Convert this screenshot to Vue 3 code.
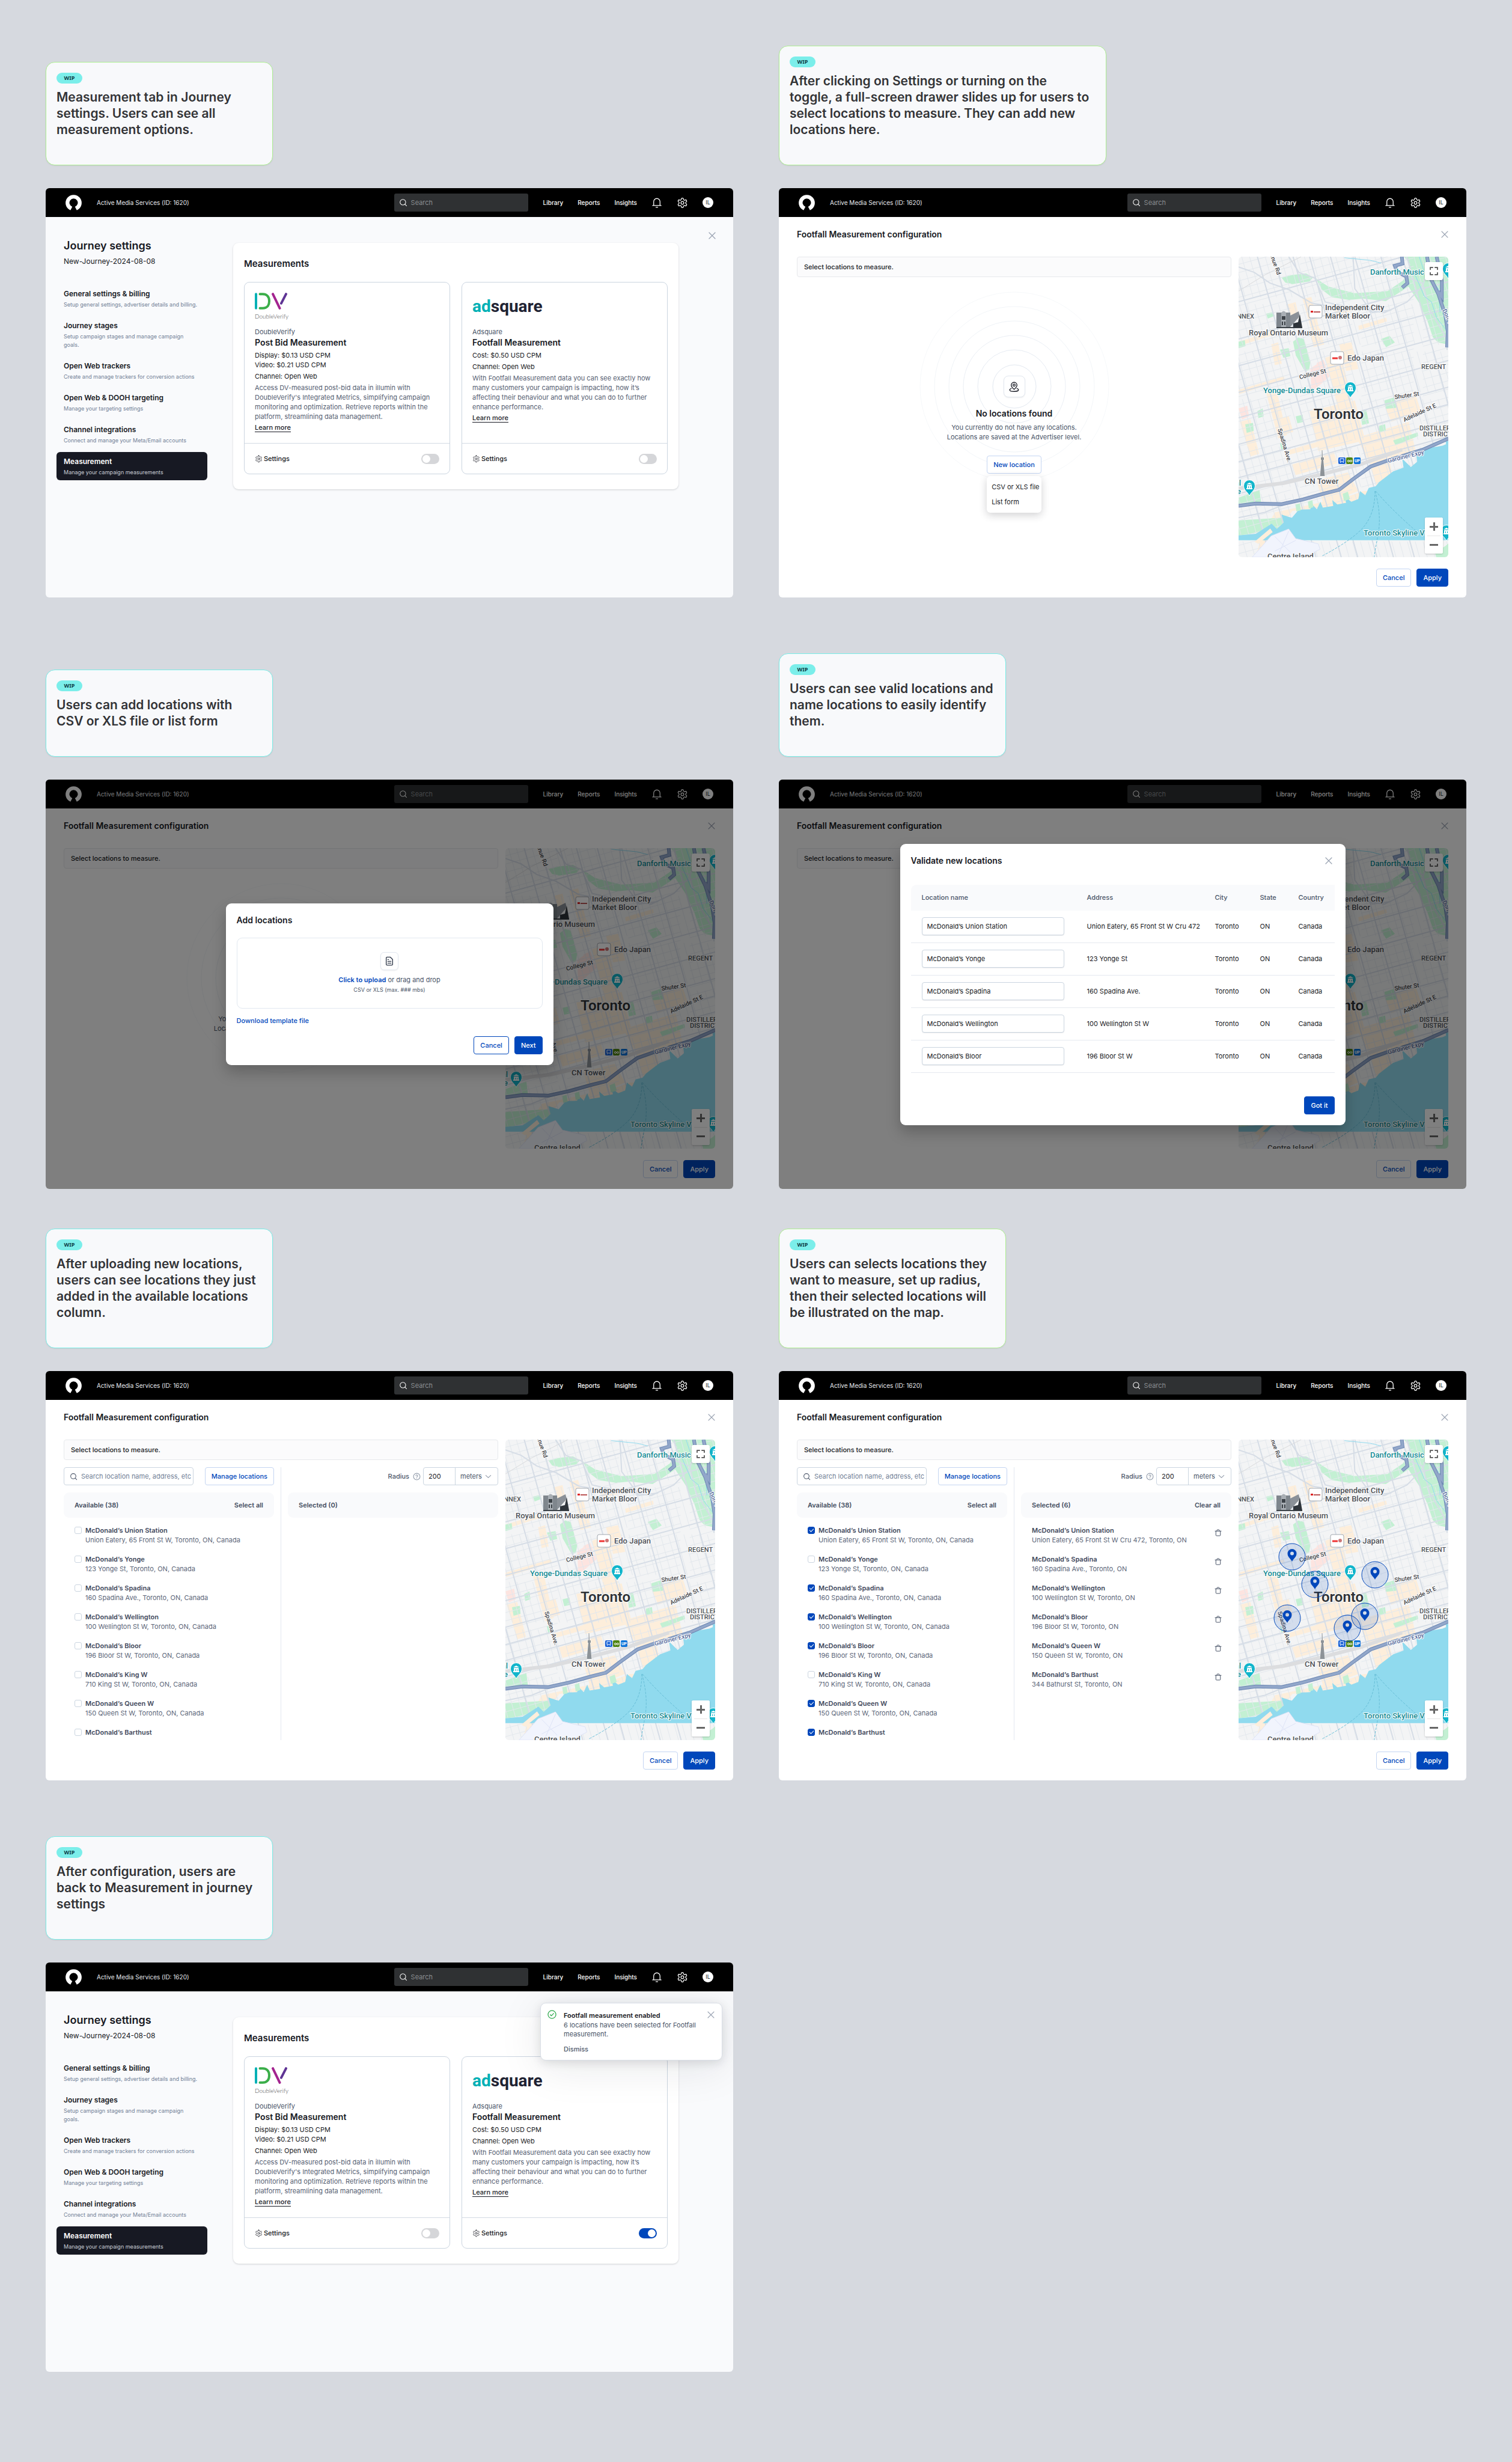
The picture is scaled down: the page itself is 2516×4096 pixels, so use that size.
<script setup>
import { h } from 'vue'

const ICONS = {
  search: '<circle cx="11" cy="11" r="8"/><path d="m21.5 21.5-4.8-4.8"/>',
  bell: '<path d="M5 18.5V10a7 7 0 0 1 14 0v8.5M2.5 18.5h19M10 22.500h4"/>',
  gear: '<path d="M12.22 2h-.44a2 2 0 0 0-2 2v.18a2 2 0 0 1-1 1.73l-.43.25a2 2 0 0 1-2 0l-.15-.08a2 2 0 0 0-2.73.73l-.22.38a2 2 0 0 0 .73 2.73l.15.1a2 2 0 0 1 1 1.72v.51a2 2 0 0 1-1 1.74l-.15.09a2 2 0 0 0-.73 2.73l.22.38a2 2 0 0 0 2.73.73l.15-.08a2 2 0 0 1 2 0l.43.25a2 2 0 0 1 1 1.73V20a2 2 0 0 0 2 2h.44a2 2 0 0 0 2-2v-.18a2 2 0 0 1 1-1.73l.43-.25a2 2 0 0 1 2 0l.15.08a2 2 0 0 0 2.73-.73l.22-.39a2 2 0 0 0-.73-2.73l-.15-.08a2 2 0 0 1-1-1.74v-.5a2 2 0 0 1 1-1.74l.15-.09a2 2 0 0 0 .73-2.73l-.22-.38a2 2 0 0 0-2.73-.73l-.15.08a2 2 0 0 1-2 0l-.43-.25a2 2 0 0 1-1-1.73V4a2 2 0 0 0-2-2z"/><circle cx="12" cy="12" r="3"/>',
  close: '<path d="M2 2l20 20M22 2 2 22"/>',
  pin: '<path d="M12 17.5c-3.5-3-6-5.3-6-9a6 6 0 0 1 12 0c0 3.7-2.5 6-6 9z"/><circle cx="12" cy="8.5" r="2.300"/><path d="M6 15.5c-2 .6-3.3 1.5-3.3 2.7 0 2.2 4.2 3.6 9.3 3.6s9.3-1.4 9.3-3.6c0-1.2-1.3-2.1-3.3-2.7"/>',
  file: '<path d="M14 2H6a2 2 0 0 0-2 2v16a2 2 0 0 0 2 2h12a2 2 0 0 0 2-2V8z"/><path d="M8 8h2M8 12.5h8M8 17h8"/>',
  help: '<circle cx="12" cy="12" r="10"/><path d="M9 9.3a3 3 0 0 1 5.9.7c0 2-2.9 2.4-2.9 4.2M12 17.5v.2"/>',
  chevron: '<path d="m3 8 9 8 9-8"/>',
  trash: '<path d="M2 6.5h20M4.5 6.5V20a2 2 0 0 0 2 2h11a2 2 0 0 0 2-2V6.5M8 6.5V4a2 2 0 0 1 2-2h4a2 2 0 0 1 2 2v2.5"/>',
  check: '<circle cx="12" cy="12" r="10.5"/><path d="m7.5 12.5 3 3 6-6.5"/>',
  expand: '<path d="M3 8V3h6M15 3h6v5M21 16v5h-6M9 21H3v-5"/>',
}

const Icon = (props) =>
  h('svg', {
    width: props.size,
    height: props.size,
    viewBox: '0 0 24 24',
    fill: 'none',
    stroke: 'currentColor',
    'stroke-width': props.weight || 2,
    'stroke-linecap': 'round',
    'stroke-linejoin': 'round',
    'aria-hidden': 'true',
    innerHTML: ICONS[props.name],
  })
Icon.props = ['name', 'size', 'weight']

const screens = [
  { kind: 'settings', tone: 'green', note: 'Measurement tab in Journey settings. Users can see all measurement options.' },
  { kind: 'empty', tone: 'green', wide: true, note: 'After clicking on Settings or turning on the toggle, a full-screen drawer slides up for users to select locations to measure. They can add new locations here.' },
  { kind: 'empty', tone: 'teal', modal: 'upload', note: 'Users can add locations with CSV or XLS file or list form' },
  { kind: 'empty', tone: 'teal', modal: 'validate', note: 'Users can see valid locations and name locations to easily identify them.' },
  { kind: 'list', tone: 'teal', picked: false, note: 'After uploading new locations, users can see locations they just added in the available locations column.' },
  { kind: 'list', tone: 'green', picked: true, note: 'Users can selects locations they want to measure, set up radius, then their selected locations will be illustrated on the map.' },
  { kind: 'settings', tone: 'teal', enabled: true, note: 'After configuration, users are back to Measurement in journey settings' },
]

const nav = [
  ['General settings & billing', 'Setup general settings, advertiser details and billing.'],
  ['Journey stages', 'Setup campaign stages and manage campaign goals.'],
  ['Open Web trackers', 'Create and manage trackers for conversion actions'],
  ['Open Web & DOOH targeting', 'Manage your targeting settings'],
  ['Channel integrations', 'Connect and manage your Meta/Email accounts'],
  ['Measurement', 'Manage your campaign measurements'],
]

const available = [
  { name: 'McDonald’s Union Station', address: 'Union Eatery, 65 Front St W, Toronto, ON, Canada', on: true },
  { name: 'McDonald’s Yonge', address: '123 Yonge St, Toronto, ON, Canada', on: false },
  { name: 'McDonald’s Spadina', address: '160 Spadina Ave., Toronto, ON, Canada', on: true },
  { name: 'McDonald’s Wellington', address: '100 Wellington St W, Toronto, ON, Canada', on: true },
  { name: 'McDonald’s Bloor', address: '196 Bloor St W, Toronto, ON, Canada', on: true },
  { name: 'McDonald’s King W', address: '710 King St W, Toronto, ON, Canada', on: false },
  { name: 'McDonald’s Queen W', address: '150 Queen St W, Toronto, ON, Canada', on: true },
  { name: 'McDonald’s Barthust', address: '', on: true },
]

const selected = [
  ['McDonald’s Union Station', 'Union Eatery, 65 Front St W Cru 472, Toronto, ON'],
  ['McDonald’s Spadina', '160 Spadina Ave., Toronto, ON'],
  ['McDonald’s Wellington', '100 Wellington St W, Toronto, ON'],
  ['McDonald’s Bloor', '196 Bloor St W, Toronto, ON'],
  ['McDonald’s Queen W', '150 Queen St W, Toronto, ON'],
  ['McDonald’s Barthust', '344 Bathurst St, Toronto, ON'],
]

const rows = [
  ['McDonald’s Union Station', 'Union Eatery, 65 Front St W Cru 472'],
  ['McDonald’s Yonge', '123 Yonge St'],
  ['McDonald’s Spadina', '160 Spadina Ave.'],
  ['McDonald’s Wellington', '100 Wellington St W'],
  ['McDonald’s Bloor', '196 Bloor St W'],
]

const rings = [36, 61, 85, 109, 133, 157]

// Street grid: avenues lean to the right going south, streets climb to the east.
const avenue = (x) => `M${x} 281l482 1127`
const street = (y) => `M192 ${y}l1206 -215`
const range = (from, to, step) => Array.from({ length: Math.ceil((to - from) / step) }, (_, i) => from + i * step)
const minorAvenues = range(-330, 1400, 45).map(avenue).join('')
const minorStreets = range(310, 1420, 31).map(street).join('')
const majorAvenues = [-110, 20, 155, 300, 395, 505, 600, 720, 860, 1010, 1160].map(avenue).join('')
const majorStreets = [450, 590, 690, 790, 885, 985, 1050, 1110, 1170].map(street).join('')

const pins = [
  [89, 195],
  [127, 241],
  [227, 225],
  [81, 297],
  [210, 294],
  [181, 314],
]
</script>

<template>
  <main class="board">
    <section v-for="(s, i) in screens" :key="i" class="cell">
      <div class="note-area">
        <aside class="note" :class="[s.tone, { wide: s.wide }]">
          <span class="pill">WIP</span>
          <p>{{ s.note }}</p>
        </aside>
      </div>

      <article class="screen" :class="s.kind">
        <header class="topbar">
          <svg class="logo" viewBox="0 0 36 36" aria-label="illumin">
            <path fill="#fff" d="M11 34.400A17.800 17.800 0 1 1 25 34.400L21 26.500A9.300 9.300 0 1 0 15 26.500Z" />
          </svg>
          <span class="account">Active Media Services (ID: 1620)</span>
          <label class="search">
            <Icon name="search" size="14" weight="1.8" />
            <input type="search" placeholder="Search" aria-label="Search" />
          </label>
          <nav class="links">
            <a href="#">Library</a>
            <a href="#">Reports</a>
            <a href="#">Insights</a>
          </nav>
          <button class="plain" aria-label="Notifications"><Icon name="bell" size="18" weight="1.7" /></button>
          <button class="plain" aria-label="Preferences"><Icon name="gear" size="19" weight="1.6" /></button>
          <span class="avatar">IL</span>
        </header>

        <div v-if="s.kind === 'settings'" class="journey">
          <div class="side">
            <h1>Journey settings</h1>
            <p class="journey-name">New-Journey-2024-08-08</p>
            <nav class="menu">
              <a v-for="(n, k) in nav" :key="k" href="#" :class="{ active: k === 5 }">
                <strong>{{ n[0] }}</strong>
                <span>{{ n[1] }}</span>
              </a>
            </nav>
          </div>

          <section class="panel">
            <h2>Measurements</h2>
            <div class="cards">
              <div class="card">
                <div class="card-body">
                  <div class="brand">
                    <svg class="dv" viewBox="0 0 54 28" fill="none" stroke-width="4" stroke-linecap="round" aria-hidden="true">
                      <path d="M2 2.200v23.600" stroke="#00b0b5" />
                      <path d="M8.500 2.200h4.500c8 0 11 5.500 11 11.800s-3 11.800-11 11.800H8.500" stroke="#3bae49" />
                      <path d="M30 2.200l11.500 23.600" stroke="#a3248f" />
                      <path d="M52 2.200l-8 15.500" stroke="#5f3494" />
                    </svg>
                    <span class="dv-name">DoubleVerify</span>
                  </div>
                  <span class="vendor">DoubleVerify</span>
                  <h3>Post Bid Measurement</h3>
                  <p class="fact">Display: $0.13 USD CPM<br />Video: $0.21 USD CPM</p>
                  <p class="fact">Channel: Open Web</p>
                  <p class="about">
                    Access DV-measured post-bid data in illumin with DoubleVerify's Integrated Metrics, simplifying
                    campaign monitoring and optimization. Retrieve reports within the platform, streamlining data
                    management.
                  </p>
                  <a class="more" href="#">Learn more</a>
                </div>
                <footer class="card-foot">
                  <button class="plain gearbtn"><Icon name="gear" size="13" weight="1.5" />Settings</button>
                  <input type="checkbox" class="toggle" role="switch" aria-label="Enable Post Bid Measurement" />
                </footer>
              </div>
              <div class="card">
                <div class="card-body">
                  <div class="brand adsquare"><span>ad</span>square</div>
                  <span class="vendor">Adsquare</span>
                  <h3>Footfall Measurement</h3>
                  <p class="fact">Cost: $0.50 USD CPM</p>
                  <p class="fact">Channel: Open Web</p>
                  <p class="about">
                    With Footfall Measurement data you can see exactly how many customers your campaign is impacting,
                    how it’s affecting their behaviour and what you can do to further enhance performance.
                  </p>
                  <a class="more" href="#">Learn more</a>
                </div>
                <footer class="card-foot">
                  <button class="plain gearbtn"><Icon name="gear" size="13" weight="1.5" />Settings</button>
                  <input type="checkbox" class="toggle" role="switch" :checked="s.enabled" aria-label="Enable Footfall Measurement" />
                </footer>
              </div>
            </div>
          </section>

          <button v-if="!s.enabled" class="plain leave" aria-label="Close"><Icon name="close" size="12" weight="2.6" /></button>

          <div v-else class="toast" role="status">
            <Icon class="ok" name="check" size="15" weight="2" />
            <div>
              <strong>Footfall measurement enabled</strong>
              <p>6 locations have been selected for Footfall measurement.</p>
              <button class="plain dismiss">Dismiss</button>
            </div>
            <button class="plain x" aria-label="Close"><Icon name="close" size="12" weight="2.2" /></button>
          </div>
        </div>

        <div v-else class="config">
          <div class="config-head">
            <h2>Footfall Measurement configuration</h2>
            <button class="plain x" aria-label="Close"><Icon name="close" size="12" weight="2.2" /></button>
          </div>
          <div class="work">
            <div class="pane">
              <p class="banner">Select locations to measure.</p>

              <div v-if="s.kind === 'empty'" class="nothing">
                <div class="spot">
                  <svg class="rings" width="318" height="318" viewBox="-159 -159 318 318" fill="none" aria-hidden="true">
                    <circle v-for="(r, k) in rings" :key="r" :r="r" stroke="#e2e8f0" :opacity="1 - k * 0.14" />
                  </svg>
                  <span class="spot-icon"><Icon name="pin" size="19" weight="1.7" /></span>
                </div>
                <h3>No locations found</h3>
                <p>You currently do not have any locations.<br />Locations are saved at the Advertiser level.</p>
                <div class="dropdown">
                  <button class="btn outline">New location</button>
                  <ul v-if="!s.modal">
                    <li>CSV or XLS file</li>
                    <li>List form</li>
                  </ul>
                </div>
              </div>

              <div v-else class="columns">
                <div class="column">
                  <div class="tools">
                    <label class="find">
                      <Icon name="search" size="13" weight="2" />
                      <input type="text" placeholder="Search location name, address, etc" aria-label="Search locations" />
                    </label>
                    <button class="btn outline">Manage locations</button>
                  </div>
                  <div class="band"><span>Available (38)</span><button class="plain">Select all</button></div>
                  <ul class="places">
                    <li v-for="(p, k) in available" :key="k">
                      <input :id="`place-${i}-${k}`" type="checkbox" class="tick" :checked="s.picked && p.on" />
                      <label :for="`place-${i}-${k}`"><strong>{{ p.name }}</strong><span v-if="p.address">{{ p.address }}</span></label>
                    </li>
                  </ul>
                </div>
                <div class="rule"></div>
                <div class="column">
                  <div class="tools end">
                    <label class="radius-label" :for="`radius-${i}`">Radius</label>
                    <Icon class="help" name="help" size="13" weight="2" />
                    <div class="radius">
                      <input :id="`radius-${i}`" type="text" value="200" />
                      <span class="unit">
                        <select aria-label="Unit"><option>meters</option></select>
                        <Icon name="chevron" size="11" weight="2.4" />
                      </span>
                    </div>
                  </div>
                  <div class="band">
                    <span>Selected ({{ s.picked ? 6 : 0 }})</span><button v-if="s.picked" class="plain">Clear all</button>
                  </div>
                  <ul v-if="s.picked" class="places">
                    <li v-for="p in selected" :key="p[0]">
                      <div class="who"><strong>{{ p[0] }}</strong><span>{{ p[1] }}</span></div>
                      <button class="plain bin" :aria-label="`Remove ${p[0]}`"><Icon name="trash" size="12" weight="2" /></button>
                    </li>
                  </ul>
                </div>
              </div>
            </div>

            <div class="map">
              <svg viewBox="0 0 349 500" preserveAspectRatio="xMidYMid slice" role="img" aria-label="Map of Toronto">
                <g class="geo" transform="scale(0.2896 0.4437) translate(-192 -281)">
                  <path fill="#f3f4f5" d="M192 281h1206v1127H192z" />
                  <g fill="#fdeedb">
                    <path d="M690 660l90-20 60 180-80 20zM560 440l50-8 50 130-45 6zM770 610l70-8 40 100-70 8zM600 860l260-40 60 150-270 40zM380 610l40-8 20 80-40 6zM470 460l50-8 20 60-40 6z" />
                    <path d="M870 960l300-60 40 110-260 50zM200 900l60-10 50 130-50 10zM350 790l60-10 60 170-50 12zM640 1120l180-30 60 70-200 50zM1030 840l180-40 30 60-170 40zM400 1240l420-60 90-20 70 0-10 30-120 20-350 25-60 60-50 50-90 40 20-50z" />
                    <path d="M192 600l200-40 0 14-200 42zM192 780l260-50 6 12-262 54zM880 540l160-30 4 14-160 32zM460 1010l400-75 5 20-400 72zM740 480l100-15 8 18-96 16z" />
                    <path d="M500 1060l240-45 20 40-240 45zM950 1070l110-20 20 60-90 40zM600 560l60-10 24 60-60 10zM420 890l60-12 26 60-60 12z" />
                  </g>
                  <path fill="#fde4e0" d="M605 700l70-30 40 60-70 40-35 15zM192 850l50-10 10 40-40 12zM640 680l40-12 15 26-40 12z" />
                  <g fill="#c3f0d3">
                    <path d="M505 600l30-16 32 6 38 85-8 30-24 6-52-60z" />
                    <path d="M440 360l60-10 80-6 40 14-20 16-100 10-40-6z" />
                    <path d="M790 281h608v330l-60-8-30-20-30-60-50-70-60-60-70 30-60 25-130-10-80 5-100-10-60-30-30-40 70 30 150 25 190-8 90-40 40-60-60-50z" />
                    <path d="M1010 590l50-12 30 25-50 18zM1030 820l60-12 8 40-60 4zM192 600l36-6 4 22-40 8zM300 860l30-10 6 30-30 6zM520 880l40-6 6 26-36 6zM230 910l45-6 4 30-40 8zM890 860l36-4 16 50-40 6zM1080 970l140-30 4 14-130 34z" />
                    <path d="M192 1185l120-30 10 50-130 14zM192 1270l240-10 40 0-30 60-120-5-130 12zM1110 1100l50-10 10 30-40 10zM430 630l50-6 10 30-40 6zM350 495l40-6 10 14-40 10zM1000 915l34-6 4 24-40 6zM430 980l26-4 6 30-24 2z" />
                  </g>
                  <g fill="none" class="minor"><path :d="minorAvenues" stroke-dasharray="70 12" /><path :d="minorStreets" stroke-dasharray="90 16" /></g>
                  <g fill="none" class="major"><path :d="majorAvenues" /><path :d="majorStreets" /></g>
                  <g fill="none" class="major">
                    <path d="M192 320l90 20 90 40 110 25 130 50 90 10M480 281l60 60 90 20 60 90 140 20 200 20 130-40 90-60 40-80M850 281l10 120 100 90 110-10M1130 281l40 80 80 20 40 100 100 110 0 40" />
                  </g>
                  <path d="M192 410l150-60 210-69" fill="none" class="rail" />
                  <path d="M192 1150l260-20 200-30 240-40 240-55" fill="none" class="rail-yard" />
                  <g fill="none">
                    <path class="creek" d="M800 285l150 10 60 10M1200 340l60 90 40 20 30 60 60 50M1230 281l30 60 80 60 10 90" />
                    <path class="hwy-edge" d="M1275 281l20 80 45 60 40 80 14 60-4 60M1130 281l4 26-44 8 14 24 52 16 6 26-30 16M1330 281l30 90 0 60-20-20" />
                    <path class="hwy" d="M1275 281l20 80 45 60 40 80 14 60-4 60M1130 281l4 26-44 8 14 24 52 16 6 26-30 16M1330 281l30 90 0 60-20-20" />
                  </g>
                  <path fill="#fdeedb" d="M1230 1060l80-50 88-30v60l-80 20z" />
                  <path fill="#90daee" d="M192 1326l100-6 90-38 30 20 40-24-14-30 60 12 40-30 66-2 8-20 30 20 20-28 14 22 60-6-6-22 30 16 50-6-10-24 40 20 40-10 10-30 30 16 20-28 40-6 20-16 80-40 60-14-8-34 50 32 36-20-4-20 60-30 90-10 20-6-6-40 10 30 78-22v392H192z" />
                  <g fill="#c3f0d3"><path d="M520 1210l24-4 6 26-26 4zM590 1200l26-6 6 26-26 6zM790 1170l30-8 12 28-34 8zM1320 1390l60-24 18-10v52h-70z" /></g>
                  <path fill="#f1f4fd" stroke="#dde3f6" d="M270 1408l110-80 100-26 40 36 130 20 10 20-60 20-90 10z" />
                  <path fill="none" stroke="#dde3f6" d="M400 1330l90 60M480 1310l-60 90M520 1345l-120 40" />
                  <path fill="#fdeedb" d="M284 1350l90-50 14 14-84 44z" />
                  <g fill="none" class="ferry">
                    <path d="M976 1160q0 80-60 130t-246 114M976 1160q40 90 16 170t-20 78M980 1160q90 70 250 160" />
                  </g>
                  <g fill="none">
                    <path class="major" d="M192 1260l150-20 170-45 200-35" />
                    <path class="hwy-edge" d="M192 1215l98-8 150 2 120-17 120-22 90-15 80-40 100-47 100-23 200-40 148-42" />
                    <path class="hwy" d="M192 1215l98-8 150 2 120-17 120-22 90-15 80-40 100-47 100-23 200-40 148-42" />
                  </g>
                </g>

                <g class="museum">
                  <path fill="#7f868d" d="M63 93h23v24H63z" /><path fill="#a9afb5" d="M71 93q4-5 8 0v24h-8z" />
                  <path fill="#3d4349" d="M72 99h6v6h-6zM72 108h2v6h-2zM76 108h2v6h-2zM63 117h43v2H63z" />
                  <path fill="#8b9198" d="M86 98l14-7 2 8-16 18z" /><path fill="#2f353b" d="M102 96l4 22H91v-7l8-2z" />
                </g>
                <g stroke="#a2a8af" fill="#fff">
                  <rect x="117" y="81" width="22" height="21" rx="3" /><rect x="153" y="158" width="22" height="21" rx="3" />
                </g>
                <path d="M120 90h4v3h-4z" fill="#d22" /><path d="M125 92h11" stroke="#b55" stroke-width="2" />
                <path d="M156 169h9" stroke="#e33" stroke-width="3" /><circle cx="169" cy="168" r="3" fill="#c77" />
                <path fill="#8d9398" stroke="#fff" stroke-width="1" paint-order="stroke" d="M138.500 322h1l.5 12h2v4h-1l2.500 27h-8l2.500-27h-1v-4h1.500z" />
                <g>
                  <rect x="166" y="334" width="12" height="11" rx="2" fill="#1a62d6" /><rect x="179" y="334" width="11" height="11" rx="2" fill="#4f8413" /><rect x="192" y="334" width="11" height="11" rx="2" fill="#0a73d9" />
                  <path d="M169 336h6v5h-6zM169 343l1-1M175 343l-1-1" fill="none" stroke="#fff" />
                  <circle cx="183" cy="340" r="1.500" fill="none" stroke="#fff" /><circle cx="187" cy="340" r="1.500" fill="none" stroke="#fff" />
                  <text class="tiny" x="197.500" y="342" text-anchor="middle">UP</text>
                </g>
                <g v-for="p in [[186, 218], [18, 381], [346, 456], [349, 20]]" :key="p[0]" :transform="`translate(${p[0]} ${p[1]})`">
                  <path fill="#12b5cb" stroke="#fff" stroke-width="1" d="M0 17C-3 10-9.500 8-9.500 0a9.500 9.500 0 0 1 19 0C9.500 8 3 10 0 17z" />
                  <path fill="#fff" d="M-5 4h10v2H-5zM-4-1h8v5h-2V1h-1v3h-2V1h-1v3h-2zM-5-2l5-3 5 3z" />
                </g>

                <g class="labels">
                  <text x="26" y="103" text-anchor="end" class="area">ANNEX</text>
                  <text x="304" y="187" class="area">REGENT</text>
                  <text x="301" y="289" class="area">DISTILLERY</text>
                  <text x="307" y="299" class="area">DISTRICT</text>
                  <text x="144" y="89">Independent City</text>
                  <text x="144" y="103">Market Bloor</text>
                  <text x="17" y="131">Royal Ontario Museum</text>
                  <text x="181" y="173">Edo Japan</text>
                  <text x="110" y="378">CN Tower</text>
                  <text x="48" y="503">Centre Island</text>
                  <text x="219" y="30" class="poi">Danforth Music</text>
                  <text x="41" y="227" class="poi">Yonge-Dundas Square</text>
                  <text x="208" y="464" class="poi">Toronto Skyline View</text>
                  <text x="4" y="381" text-anchor="end" class="poi">al</text>
                  <text x="4" y="395" text-anchor="end" class="poi">re</text>
                  <g class="road">
                    <text transform="translate(102 204) rotate(-14)">College St</text>
                    <text transform="translate(260 237) rotate(-8)">Shuter St</text>
                    <text transform="translate(276 275) rotate(-25)">Adelaide St E</text>
                    <text transform="translate(249 343) rotate(-14)" class="way">Gardiner Expy</text>
                    <text transform="translate(65 287) rotate(73)">Spadina Ave.</text>
                    <text transform="translate(48 -14) rotate(70)">Avenue Rd</text>
                    <text transform="translate(339 89) rotate(66)" class="way">Don Valley</text>
                  </g>
                  <text x="125" y="270" class="city">Toronto</text>
                </g>

                <g v-if="s.picked">
                  <g v-for="p in pins" :key="p[0]" :transform="`translate(${p[0]} ${p[1]})`">
                    <circle r="22" fill="#0047bb" fill-opacity="0.13" stroke="#0047bb" />
                    <path fill="#0047bb" fill-rule="evenodd" d="M0 8C-2 3-7.500 1-7.500-5.500a7.500 7.500 0 0 1 15 0C7.500 1 2 3 0 8zM0-2.500a3 3 0 1 0 0-6 3 3 0 0 0 0 6z" />
                  </g>
                </g>
              </svg>
              <button class="map-btn full" aria-label="Full screen"><Icon name="expand" size="16" weight="3" /></button>
              <div class="zoom">
                <button class="map-btn" aria-label="Zoom in"><i class="bar"></i><i class="bar up"></i></button>
                <button class="map-btn" aria-label="Zoom out"><i class="bar"></i></button>
              </div>
            </div>
          </div>
          <footer class="actions">
            <button class="btn outline">Cancel</button>
            <button class="btn solid">Apply</button>
          </footer>
        </div>

        <div v-if="s.modal" class="overlay">
          <div v-if="s.modal === 'upload'" class="dialog upload" role="dialog" aria-label="Add locations">
            <h2>Add locations</h2>
            <div class="drop">
              <span class="file"><Icon name="file" size="16" weight="2" /></span>
              <p><a href="#">Click to upload</a> or drag and drop</p>
              <small>CSV or XLS (max. ### mbs)</small>
            </div>
            <a class="template" href="#">Download template file</a>
            <footer>
              <button class="btn outline strong">Cancel</button>
              <button class="btn solid">Next</button>
            </footer>
          </div>
          <div v-else class="dialog validate" role="dialog" aria-label="Validate new locations">
            <div class="dialog-head">
              <h2>Validate new locations</h2>
              <button class="plain x" aria-label="Close"><Icon name="close" size="12" weight="2.6" /></button>
            </div>
            <table>
              <colgroup><col class="c1" /><col class="c2" /><col class="c3" /><col class="c4" /><col /></colgroup>
              <thead>
                <tr><th>Location name</th><th>Address</th><th>City</th><th>State</th><th>Country</th></tr>
              </thead>
              <tbody>
                <tr v-for="r in rows" :key="r[0]">
                  <td><input type="text" :value="r[0]" aria-label="Location name" /></td>
                  <td>{{ r[1] }}</td>
                  <td>Toronto</td>
                  <td>ON</td>
                  <td>Canada</td>
                </tr>
              </tbody>
            </table>
            <footer><button class="btn solid">Got it</button></footer>
          </div>
        </div>
      </article>
    </section>
  </main>
</template>

<style>
html,
body {
  margin: 0;
  background: #d6d9df;
}
</style>

<style scoped>
* {
  box-sizing: border-box;
}
.board {
  display: grid;
  grid-template-columns: 1fr 1fr;
  column-gap: 76px;
  padding: 10px 76px 150px;
  background: #d6d9df;
  font-family: Inter, 'Liberation Sans', sans-serif;
  font-size: 11px;
  line-height: 16px;
  color: #171923;
}
h1,
h2,
h3,
p,
ul {
  margin: 0;
  padding: 0;
  list-style: none;
}
a {
  color: inherit;
  text-decoration: none;
}
button,
input,
select {
  font: inherit;
  color: inherit;
}
svg {
  flex: none;
  display: block;
}
.plain {
  display: flex;
  align-items: center;
  padding: 0;
  border: 0;
  background: none;
}

/* notes */
.note-area {
  display: flex;
  align-items: flex-end;
  min-height: 265px;
  margin-bottom: 38px;
}
.note {
  width: 378px;
  padding: 17px 17px 45px;
  border: 1px solid #79eee8;
  border-radius: 15px;
  background: #f8f9fb;
  box-shadow: 0 1px 2px rgba(0, 0, 0, 0.08);
}
.note.wide {
  width: 545px;
  padding-right: 26px;
}
.note.green {
  border-color: #aef092;
}
.pill {
  display: flex;
  align-items: center;
  justify-content: center;
  width: 43px;
  height: 18px;
  border-radius: 9px;
  background: #7beeea;
  color: #0b3b44;
  font: 700 9px/18px 'Noto Sans', 'Open Sans', sans-serif;
}
.note p {
  margin-top: 9px;
  font-size: 21px;
  line-height: 27px;
  font-weight: 600;
  color: #323336;
}

/* frame */
.screen {
  position: relative;
  display: flex;
  flex-direction: column;
  min-height: 681px;
  border-radius: 6px;
  overflow: hidden;
  background: #fff;
}
.screen.settings {
  background: #f9fafc;
}
.topbar {
  display: flex;
  align-items: center;
  gap: 24px;
  height: 48px;
  padding: 0 33px;
  background: #000;
  color: #fff;
}
.logo {
  width: 27px;
  height: 27px;
}
.account {
  margin-left: 1px;
  font-size: 10px;
  color: #e7e9ee;
}
.search {
  display: flex;
  align-items: center;
  gap: 6px;
  width: 223px;
  height: 30px;
  margin: 0 1px 0 auto;
  padding: 0 8px;
  border-radius: 3px;
  background: #2f3133;
}
.search input {
  flex: 1;
  min-width: 0;
  padding: 0;
  border: 0;
  background: none;
  outline: 0;
}
.search input::placeholder {
  color: #8a8d91;
  opacity: 1;
}
.links {
  display: flex;
  gap: 24px;
  font-size: 10px;
  font-weight: 500;
}
.avatar {
  width: 18px;
  height: 18px;
  border-radius: 50%;
  background: #fff;
  color: #171923;
  font-size: 9px;
  line-height: 18px;
  text-align: center;
}

/* journey settings */
.journey {
  position: relative;
  flex: 1;
  display: flex;
  align-items: flex-start;
  overflow: hidden;
}
.side {
  width: 312px;
  padding: 36px 43px 0 18px;
}
h1 {
  padding-left: 12px;
  font-size: 18px;
  line-height: 24px;
  font-weight: 600;
}
.journey-name {
  margin-top: 4px;
  padding-left: 12px;
  font-size: 12px;
  line-height: 20px;
}
.menu {
  display: flex;
  flex-direction: column;
  gap: 6px;
  margin-top: 28px;
}
.menu a {
  display: flex;
  flex-direction: column;
  gap: 3px;
  padding: 7px 12px 6px;
  border-radius: 6px;
}
.menu strong {
  font-size: 12px;
  line-height: 17px;
  font-weight: 600;
}
.menu span {
  font-size: 9px;
  line-height: 14px;
  color: #718096;
}
.menu .active {
  background: #171923;
  color: #fff;
}
.menu .active span {
  color: #cbd0d9;
}
.panel {
  flex: 1;
  margin: 43px 91px 0 0;
  padding: 25px 18px;
  border-radius: 9px;
  background: #fff;
  box-shadow: 0 1px 3px rgba(23, 25, 35, 0.18);
}
.panel h2 {
  font-size: 15px;
  line-height: 20px;
  font-weight: 600;
}
.cards {
  display: flex;
  gap: 19px;
  margin-top: 20px;
}
.card {
  flex: 1;
  min-width: 0;
  display: flex;
  flex-direction: column;
  border: 1px solid #cbd5e0;
  border-radius: 9px;
}
.card-body {
  flex: 1;
  display: flex;
  flex-direction: column;
  align-items: flex-start;
  padding: 17px 17px 18px;
}
.brand {
  height: 57px;
}
.dv {
  width: 54px;
  height: 28px;
}
.dv-name {
  display: block;
  margin-top: 4px;
  font: 300 10px/14px Lato, sans-serif;
  color: #4a4a4d;
}
.adsquare {
  font: 700 28px/45px Roboto, sans-serif;
  color: #1f2333;
}
.adsquare span {
  color: #00b0b5;
}
.vendor {
  color: #4a5568;
}
h3 {
  font-size: 14px;
  line-height: 20px;
  font-weight: 600;
}
.fact,
.about,
.more {
  margin-top: 3px;
}
.about {
  color: #566072;
}
.more {
  line-height: 14px;
  font-weight: 500;
  border-bottom: 1px solid #171923;
}
.card-foot {
  display: flex;
  align-items: center;
  justify-content: space-between;
  height: 51px;
  padding: 0 17px;
  border-top: 1px solid #d3dae3;
}
.gearbtn {
  gap: 2px;
  font-weight: 500;
}
.toggle {
  appearance: none;
  display: flex;
  width: 30px;
  height: 17px;
  margin: 0;
  padding: 2px;
  border-radius: 9px;
  background: #d5d6d9;
}
.toggle::after {
  content: '';
  width: 13px;
  height: 13px;
  border-radius: 50%;
  background: #fff;
}
.toggle:checked {
  justify-content: flex-end;
  background: #0047bb;
}
.leave {
  position: absolute;
  top: 25px;
  right: 29px;
  color: #9aa3b2;
}
.toast {
  position: absolute;
  top: 19px;
  right: 18px;
  display: flex;
  gap: 12px;
  width: 303px;
  padding: 11px 11px 10px 11px;
  border: 1px solid #d9dee6;
  border-radius: 9px;
  background: #fff;
  box-shadow: 0 4px 16px rgba(23, 25, 35, 0.12), 0 10px 70px rgba(23, 25, 35, 0.1);
}
.toast div {
  flex: 1;
}
.toast strong {
  display: block;
  line-height: 18px;
  font-weight: 600;
}
.toast p {
  line-height: 15px;
  color: #4a5568;
}
.toast .x {
  align-self: flex-start;
  margin: 2px 1px 0 0;
}
.ok {
  color: #2aa84a;
}
.dismiss {
  margin-top: 9px;
  font-weight: 500;
  color: #4a5568;
}
.x {
  color: #9aa3b2;
}

/* configuration drawer */
.config {
  flex: 1;
  display: flex;
  flex-direction: column;
  padding: 19px 30px 18px;
}
.config-head,
.dialog-head {
  display: flex;
  align-items: center;
  justify-content: space-between;
}
.config-head h2,
.dialog h2 {
  font-size: 14px;
  line-height: 20px;
  font-weight: 600;
}
.work {
  flex: 1;
  display: flex;
  gap: 12px;
  margin-top: 27px;
}
.pane {
  flex: 1;
  min-width: 0;
  display: flex;
  flex-direction: column;
}
.banner {
  padding: 8px 11px;
  border: 1px solid #e7e9ec;
  border-radius: 4px;
  background: #fbfbfc;
  font-weight: 500;
}
.nothing {
  display: flex;
  flex-direction: column;
  align-items: center;
  padding-top: 164px;
}
.spot {
  position: relative;
  display: grid;
  place-items: center;
  width: 36px;
  height: 36px;
}
.rings {
  position: absolute;
  top: -141px;
  left: -141px;
}
.spot-icon,
.file {
  position: relative;
  display: grid;
  place-items: center;
  width: 36px;
  height: 36px;
  border: 1px solid #e2e8f0;
  border-radius: 8px;
  background: #fff;
  box-shadow: 0 1px 2px rgba(23, 25, 35, 0.08);
}
.nothing h3 {
  position: relative;
  margin-top: 17px;
}
.nothing p {
  position: relative;
  margin-top: 5px;
  text-align: center;
  color: #4a5568;
}
.dropdown {
  position: relative;
  margin-top: 23px;
}
.dropdown ul {
  position: absolute;
  top: 34px;
  left: 0;
  width: 100%;
  padding: 6px 0 5px;
  border-radius: 6px;
  background: #fff;
  box-shadow: 0 4px 14px rgba(23, 25, 35, 0.2);
}
.dropdown li {
  padding-left: 8px;
  line-height: 25px;
  white-space: nowrap;
}
.btn {
  height: 30px;
  padding: 0 10px;
  border: 1px solid #0047bb;
  border-radius: 4px;
  font-weight: 500;
  white-space: nowrap;
}
.outline {
  border-color: #c4d5f2;
  background: #fff;
  color: #0047bb;
}
.outline.strong {
  border-color: #0047bb;
}
.solid {
  background: #0047bb;
  color: #fff;
}
.actions {
  display: flex;
  justify-content: flex-end;
  gap: 9px;
  margin-top: 19px;
}

/* location columns */
.columns {
  flex: 1;
  display: flex;
  gap: 11px;
  margin-top: 12px;
}
.column {
  flex: 1;
  min-width: 0;
}
.rule {
  width: 1px;
  background: #e2e8f0;
}
.tools {
  display: flex;
  align-items: center;
  justify-content: space-between;
  height: 30px;
}
.tools.end {
  justify-content: flex-end;
}
.find {
  display: flex;
  align-items: center;
  gap: 6px;
  width: 216px;
  height: 30px;
  padding: 0 2px 0 9px;
  border: 1px solid #cbd5e0;
  border-radius: 4px;
  color: #4a5568;
}
.find input {
  flex: 1;
  min-width: 0;
  padding: 0;
  border: 0;
  outline: 0;
  background: none;
}
.find input::placeholder {
  color: #718096;
  opacity: 1;
}
.radius-label {
  font-weight: 500;
  color: #4a5568;
}
.help {
  margin: 0 4px 0 6px;
  color: #8f99a8;
}
.radius {
  display: flex;
  width: 125px;
  height: 30px;
  border: 1px solid #cbd5e0;
  border-radius: 4px;
}
.radius input {
  width: 53px;
  padding: 0 8px;
  border: 0;
  border-right: 1px solid #cbd5e0;
  outline: 0;
  background: none;
}
.unit {
  position: relative;
  flex: 1;
  display: flex;
  align-items: center;
  color: #4a5568;
}
.unit select {
  appearance: none;
  width: 100%;
  height: 100%;
  padding: 0 8px;
  border: 0;
  outline: 0;
  background: none;
}
.unit svg {
  position: absolute;
  right: 10px;
  color: #8f99a8;
  pointer-events: none;
}
.band {
  display: flex;
  align-items: center;
  justify-content: space-between;
  height: 42px;
  margin-top: 12px;
  padding: 0 18px;
  border-radius: 9px;
  background: #f9fafc;
  font-weight: 600;
  color: #434d60;
}
.places {
  display: flex;
  flex-direction: column;
  gap: 16px;
  padding: 13px 16px 0 18px;
}
.places li {
  display: flex;
  gap: 6px;
}
.places label,
.who {
  flex: 1;
  min-width: 0;
}
.places strong {
  display: block;
  font-weight: 600;
  color: #3f495c;
}
.places span {
  display: block;
  color: #5b6578;
}
.tick {
  appearance: none;
  position: relative;
  flex: none;
  width: 12px;
  height: 12px;
  margin: 2px 0 0;
  border: 1px solid #cbd5e0;
  border-radius: 3px;
  background: #fff;
}
.tick:checked {
  border-color: #0047bb;
  background: #0047bb;
}
.tick:checked::after {
  content: '';
  position: absolute;
  top: 2px;
  left: 2px;
  width: 6px;
  height: 3px;
  border: solid #fff;
  border-width: 0 0 1px 1px;
  transform: rotate(-45deg);
}
.bin {
  align-self: flex-start;
  margin-top: 6px;
  color: #4a5568;
}

/* map */
.map {
  position: relative;
  width: 349px;
  min-height: 500px;
  border-radius: 6px;
  overflow: hidden;
}
.map > svg {
  position: absolute;
  width: 100%;
  height: 100%;
}
.geo path {
  vector-effect: non-scaling-stroke;
}
.minor path {
  stroke: #e3e8ed;
  stroke-width: 1;
}
.major path,
path.major {
  stroke: #d6dde6;
  stroke-width: 2;
}
.rail {
  stroke: #d9dadc;
  stroke-width: 1;
}
.rail-yard {
  stroke: #dcdddf;
  stroke-width: 6;
}
.creek {
  stroke: #90daee;
  stroke-width: 1;
}
.hwy-edge {
  stroke: #6c87b3;
  stroke-width: 6;
}
.hwy {
  stroke: #92a7ca;
  stroke-width: 4;
}
.ferry path {
  stroke: #66bdd6;
  stroke-width: 1;
  stroke-dasharray: 4 2;
}
.labels text {
  font: 500 13px Roboto, sans-serif;
  fill: #4d5156;
  stroke: #fff;
  stroke-width: 2px;
  stroke-linejoin: round;
  paint-order: stroke;
}
.labels .area {
  font-size: 11px;
  fill: #4d5156;
}
.labels .poi {
  fill: #128a93;
}
.labels .road text {
  font-size: 10px;
  fill: #3f4348;
}
.labels .road .way {
  fill: #52699a;
}
.labels .city {
  font-size: 24px;
  font-weight: 600;
  fill: #2f3235;
}
.tiny {
  font: 700 7px Roboto, sans-serif;
  fill: #fff;
}
.map-btn {
  position: relative;
  display: grid;
  place-items: center;
  width: 30px;
  height: 30px;
  padding: 0;
  border: 0;
  background: #fff;
  color: #666;
}
.full {
  position: absolute;
  top: 9px;
  right: 9px;
  border-radius: 3px;
  box-shadow: 0 1px 3px rgba(0, 0, 0, 0.2);
}
.zoom {
  position: absolute;
  right: 9px;
  bottom: 6px;
  border-radius: 3px;
  overflow: hidden;
  background: #fff;
  box-shadow: 0 1px 3px rgba(0, 0, 0, 0.2);
}
.zoom button + button::before {
  content: '';
  position: absolute;
  top: 0;
  left: 4px;
  right: 4px;
  height: 1px;
  background: #e6e6e6;
}
.bar {
  grid-area: 1 / 1;
  width: 14px;
  height: 3px;
  background: #666;
}
.bar.up {
  width: 3px;
  height: 14px;
}

/* dialogs */
.overlay {
  position: absolute;
  inset: 0;
  display: grid;
  place-items: center;
  background: rgba(0, 0, 0, 0.5);
}
.dialog {
  padding: 18px;
  border-radius: 9px;
  background: #fff;
  box-shadow: 0 12px 24px rgba(0, 0, 0, 0.22);
}
.dialog footer {
  display: flex;
  justify-content: flex-end;
  gap: 9px;
}
.upload {
  width: 545px;
}
.drop {
  display: flex;
  flex-direction: column;
  align-items: center;
  height: 118px;
  margin-top: 19px;
  padding-top: 23px;
  border: 1px solid #e2e8f0;
  border-radius: 9px;
}
.file {
  width: 30px;
  height: 30px;
  border-radius: 6px;
  color: #2d3748;
}
.drop p {
  margin-top: 8px;
  color: #4a5568;
}
.drop a {
  font-weight: 600;
  color: #0047bb;
}
.drop small {
  margin-top: 2px;
  font-size: 9px;
  line-height: 14px;
  color: #4a5568;
}
.template {
  display: block;
  margin: 12px 0 18px;
  font-weight: 500;
  color: #0047bb;
}
.validate {
  width: 741px;
}
.dialog-head .x {
  margin-right: 4px;
}
table {
  width: 100%;
  margin: 30px 0 39px;
  border-collapse: separate;
  border-spacing: 0;
  table-layout: fixed;
}
.c1 {
  width: 275px;
}
.c2 {
  width: 213px;
}
.c3 {
  width: 75px;
}
.c4 {
  width: 64px;
}
th {
  height: 43px;
  padding: 0 0 0 18px;
  background: #f9fafc;
  text-align: left;
  font-weight: 500;
  color: #4a5568;
}
th:first-child {
  border-radius: 9px 0 0 0;
}
td {
  height: 54px;
  padding: 0 0 0 18px;
  border-bottom: 1px solid #e5e9ef;
  white-space: nowrap;
}
td input {
  display: block;
  width: 237px;
  height: 30px;
  padding: 0 8px;
  border: 1px solid #cbd5e0;
  border-radius: 4px;
  background: #fff;
  box-shadow: 0 1px 1px rgba(23, 25, 35, 0.08);
}
</style>
